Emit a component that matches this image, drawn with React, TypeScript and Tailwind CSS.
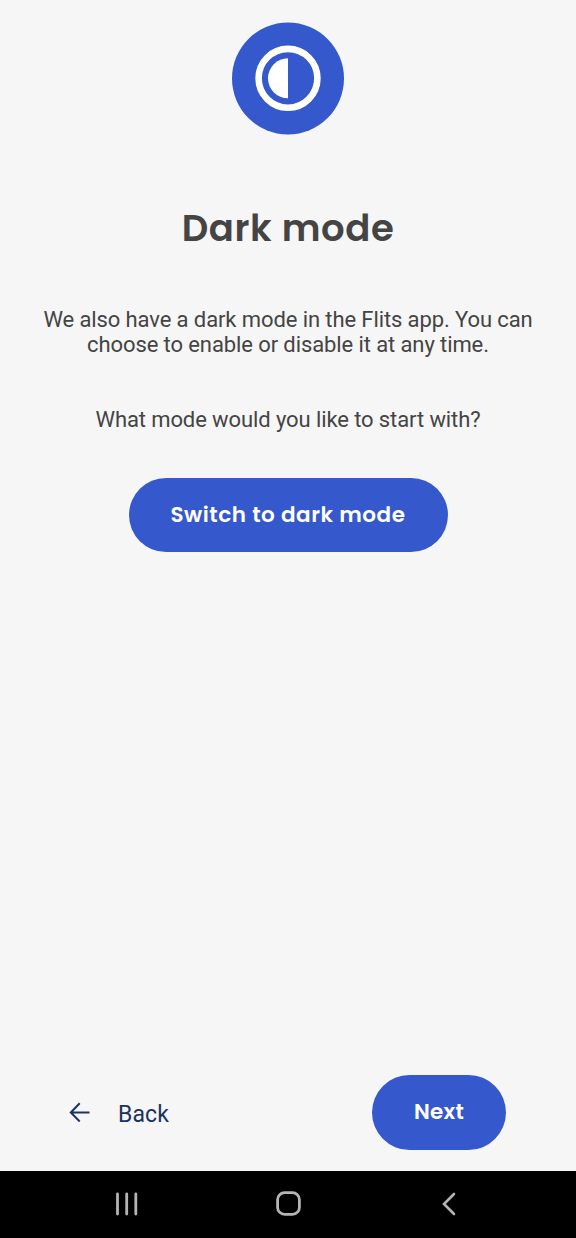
export default function App() {
  return (
    <div className="flex h-[1238px] w-[576px] flex-col bg-[#f6f6f6] font-['Roboto',sans-serif] text-[#444444]">
      <main className="flex flex-1 flex-col items-center pt-[22px]">
        <svg viewBox="0 0 112 113" className="h-[113px] w-[112px] shrink-0">
          <circle cx="56" cy="56.5" r="56" fill="#3559cd" />
          <circle cx="56" cy="56.3" r="29.4" fill="none" stroke="#fff" strokeWidth="6.6" />
          <path d="M56 36.3a20 20 0 0 0 0 40z" fill="#fff" />
        </svg>
        <h1 className="mt-[63px] font-['Poppins',sans-serif] text-[37px] leading-[60px] font-semibold tracking-[0.6px] whitespace-nowrap">
          Dark mode
        </h1>
        <p className="mt-[49px] text-center text-[22px] leading-[25px] tracking-[-0.1px] whitespace-nowrap">
          We also have a dark mode in the Flits app. You can
          <br />
          choose to enable or disable it at any time.
        </p>
        <p className="mt-[50px] text-center text-[22px] leading-[26px] tracking-[-0.1px] whitespace-nowrap">
          What mode would you like to start with?
        </p>
        <button className="mt-[45px] flex h-[74px] w-[319px] items-center justify-center rounded-full bg-[#3559cd] font-['Poppins',sans-serif] text-[21.5px] font-semibold tracking-[0.55px] text-white">
          Switch to dark mode
        </button>
      </main>
      <footer className="flex h-[96px] justify-between pr-[70px] pl-[69px]">
        <button className="flex h-[74px] items-center gap-[28px] text-[23px] tracking-[0.1px] text-[#1b345f]">
          <svg viewBox="0 0 21 20" className="h-[20px] w-[21px]" fill="none" stroke="currentColor" strokeWidth="2">
            <path d="M20.5 10.5H2M10.7 1.3L1.8 10.5l8.9 9" />
          </svg>
          <span className="pt-[7px]">Back</span>
        </button>
        <button className="h-[75px] w-[134px] rounded-full bg-[#3559cd] font-['Poppins',sans-serif] text-[21.5px] font-semibold tracking-[0.3px] text-white">
          Next
        </button>
      </footer>
      <nav className="flex h-[67px] items-center justify-between bg-black pr-[120px] pb-[2px] pl-[115px] text-[#b4b4b4]">
        <svg viewBox="0 0 24 24" className="size-[24px]" fill="none" stroke="currentColor" strokeWidth="2.8" strokeLinecap="round">
          <path d="M2.5 2v20M11.7 2v20M20.8 2v20" />
        </svg>
        <svg viewBox="0 0 25 25" className="-ml-[4px] size-[25px]" fill="none" stroke="currentColor" strokeWidth="2.8">
          <rect x="1.6" y="1.6" width="21.8" height="21.8" rx="7" />
        </svg>
        <svg viewBox="0 0 15 24" className="h-[24px] w-[15px]" fill="none" stroke="currentColor" strokeWidth="2.6" strokeLinecap="round">
          <path d="M13 2L3 12l10 10" />
        </svg>
      </nav>
    </div>
  );
}
